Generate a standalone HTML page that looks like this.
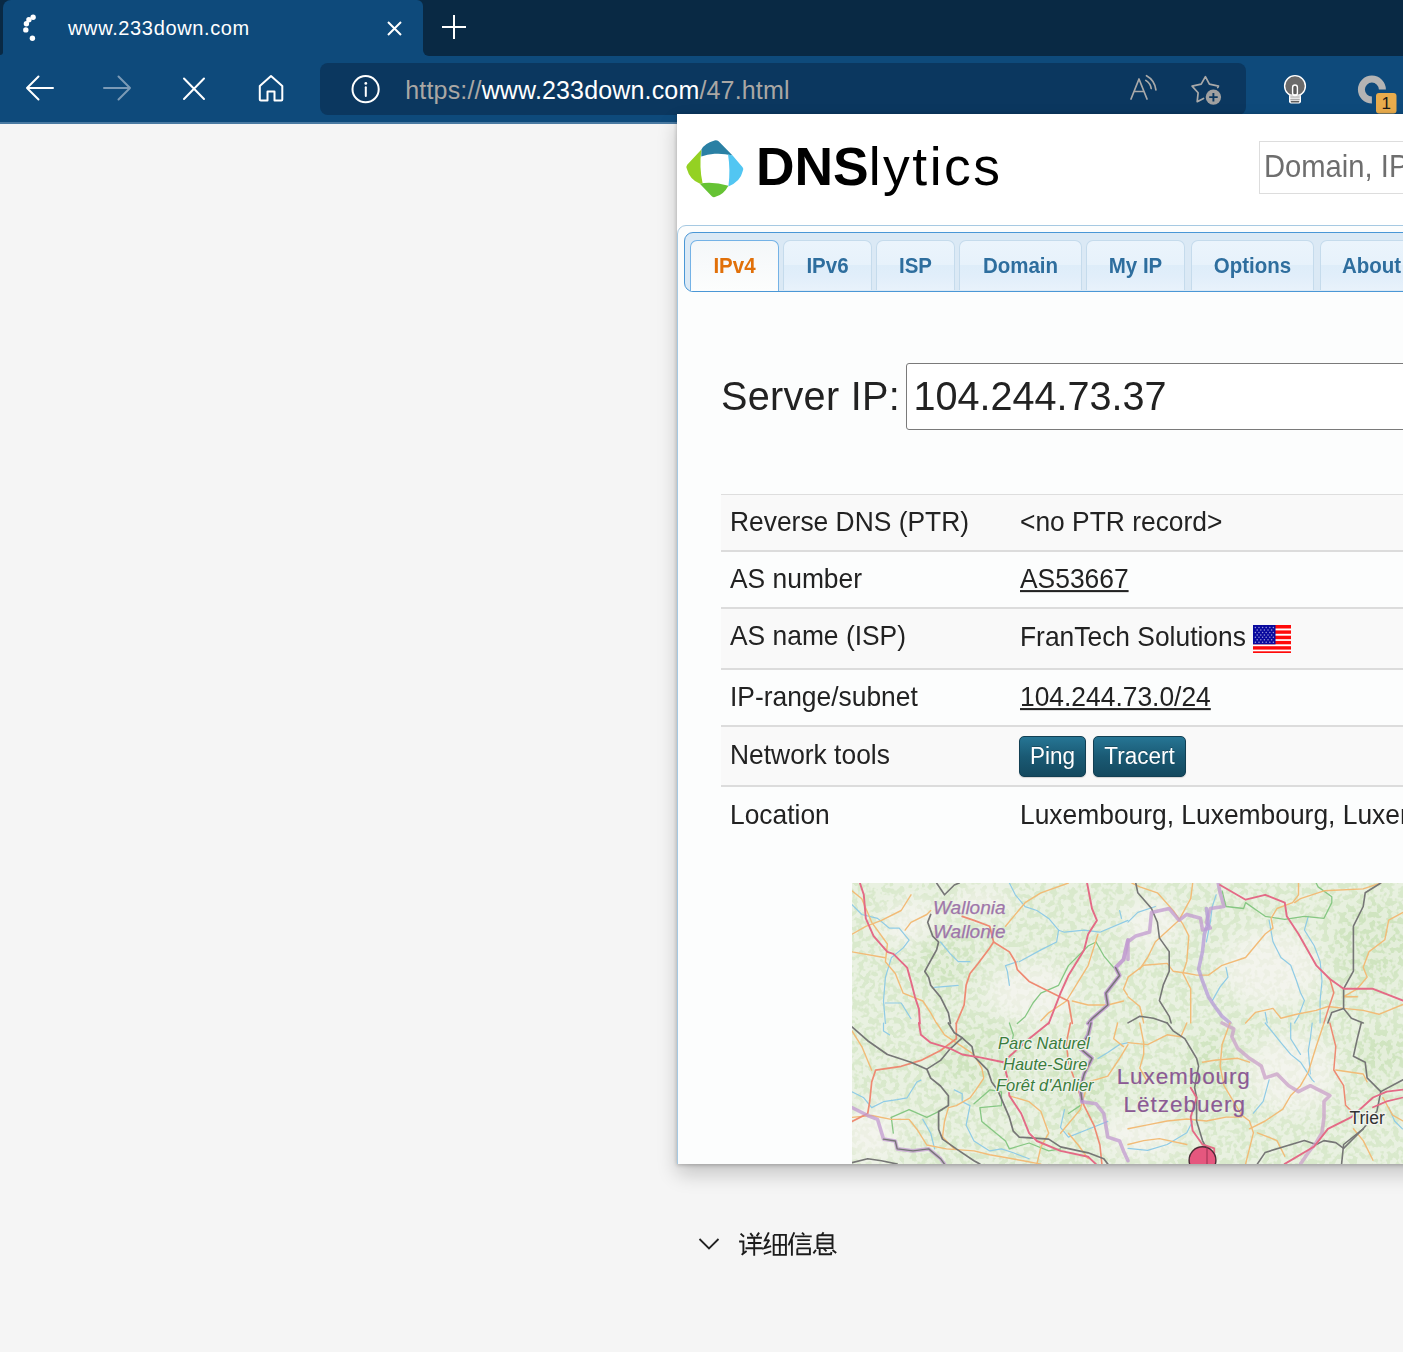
<!DOCTYPE html>
<html><head><meta charset="utf-8">
<style>
*{margin:0;padding:0;box-sizing:border-box}
html,body{width:1403px;height:1352px;overflow:hidden;background:#f5f5f5;font-family:"Liberation Sans",sans-serif}
body{position:relative}
.abs{position:absolute}
.nw{white-space:nowrap}
#strip{left:423px;top:0;width:980px;height:55.6px;background:#092944;border-radius:0 0 0 6px}
#stripl{left:0;top:0;width:3.4px;height:54.5px;background:#092944;border-radius:0 0 3px 0}
#cornl{left:0;top:0;width:14px;height:12px;background:#092944}
#cornr{left:410px;top:0;width:14px;height:12px;background:#092944}
#tab{left:3.4px;top:0;width:419.6px;height:60px;background:#0e4a7b;border-radius:8px 6px 0 0}
#toolbar{left:0;top:0;width:1403px;height:122px;background:#0e4a7b}
#tbline{left:0;top:122.3px;width:1403px;height:1.7px;background:#4a7aa2}
#addr{left:320px;top:63px;width:926px;height:52.4px;background:#0b375f;border-radius:8px}
.tabtitle{left:68px;top:17px;font-size:20px;letter-spacing:.64px;color:#fff}
.url{left:405.3px;top:75.5px;font-size:25px;letter-spacing:.16px;color:#aaa7a4}
.url b{font-weight:normal;color:#fff}
#pshadow{left:677px;top:114px;width:760px;height:1050px;box-shadow:0 1px 4px rgba(0,0,0,.24),0 10px 19px rgba(0,0,0,.2)}
#popup{left:677px;top:114px;width:726px;height:1050px;background:#fff;overflow:hidden}
#pin{left:-677px;top:-114px;width:1403px;height:1352px}
#uitabs{left:677px;top:225px;width:800px;height:1000px;background:#fcfdfd;border:1px solid #a6c9e2;border-radius:9px 0 0 0}
#nav{left:684px;top:232px;width:800px;height:60px;background:#dbe9f5;border:1px solid #4a97d6;border-radius:9px 0 0 9px}
.tb{top:240px;height:50px;border:1px solid #c5dbec;border-bottom:0;border-radius:7px 7px 0 0;
 background:linear-gradient(#ebf4fc 0%,#e7f2fb 48%,#deedf9 50%,#e1eefa 72%,#e8f2fb 100%);
 color:#2e6e9e;font-weight:bold;font-size:20.5px;text-align:center;line-height:50px}
.tb.act{border-color:#74b2e6;background:linear-gradient(#f4f7f9,#fcfdfd);color:#e17009}
.ts{display:inline-block;transform:scaleY(1.07);transform-origin:0 32.1px}
.bs{display:inline-block;transform:scaleY(1.09);transform-origin:0 27.6px}
.cell{font-size:26.4px;color:#222;transform:scaleY(1.035);transform-origin:0 24.1px}
.row{left:721px;width:800px}
.btn{text-shadow:0 -1px 0 rgba(0,0,0,.25);top:736px;height:41px;border:1px solid #123f53;border-radius:5px;background:linear-gradient(#267594,#1a5a74 50%,#14495f);color:#fff;font-size:22.5px;line-height:39.5px;text-align:center;box-shadow:0 1px 1px rgba(0,0,0,.15)}
</style></head>
<body>
<div id="toolbar" class="abs"></div>
<div id="strip" class="abs"></div>
<div id="stripl" class="abs"></div>
<div id="cornl" class="abs"></div>
<div id="cornr" class="abs"></div>
<div id="tab" class="abs"></div>
<div id="tbline" class="abs"></div>
<!-- spinner -->
<svg class="abs" style="left:0;top:0" width="60" height="56">
<g fill="#fff"><circle cx="33.1" cy="17.3" r="2.7"/><circle cx="28.9" cy="19.8" r="2.7"/><circle cx="26.4" cy="23.8" r="2.7"/><circle cx="25.8" cy="29.9" r="2.7"/><circle cx="32.4" cy="38.3" r="2.7"/></g>
</svg>
<div class="abs nw tabtitle">www.233down.com</div>
<svg class="abs" style="left:380px;top:8px" width="100" height="40">
<g stroke="#fff" stroke-width="2" fill="none"><path d="M8 14 L21 27 M21 14 L8 27"/><path d="M74 7 V31 M62 19 H86"/></g>
</svg>
<div id="addr" class="abs"></div>
<!-- toolbar icons -->
<svg class="abs" style="left:0;top:55px" width="400" height="67">
<g fill="none" stroke-width="2" stroke-linecap="round" stroke-linejoin="round">
<path stroke="#fff" d="M27 33 H53 M38.5 21.5 L27 33 L38.5 44.5"/>
<path stroke="#7b9ab6" d="M104 33 H130 M118.5 21.5 L130 33 L118.5 44.5"/>
<path stroke="#fff" d="M184 23.5 L204 44 M204 23.5 L184 44"/>
<path stroke="#fff" d="M259.8 31 L271 21 L282.3 31 V44.5 Q282.3 45.5 281.3 45.5 H274.5 V36.5 H267.5 V45.5 H260.8 Q259.8 45.5 259.8 44.5 Z"/>
<circle stroke="#fff" cx="365.6" cy="34.2" r="13.1"/>
<path stroke="#fff" d="M365.8 32.3 V41"/>
</g>
<circle fill="#fff" cx="365.8" cy="28.4" r="1.4"/>
</svg>
<div class="abs nw url">https://<b>www.233down.com</b>/47.html</div>
<svg class="abs" style="left:1110px;top:55px" width="293" height="67">
<g fill="none" stroke="#a9a9a9" stroke-width="1.7" stroke-linecap="round" stroke-linejoin="round">
<path d="M21 44 L29 24 L37 44 M24 36.5 H34"/>
<path d="M35.8 25.4 Q40.5 28.5 41.2 33.5"/>
<path d="M36.5 20.7 Q44.5 25 45.9 34.8"/>
<path d="M107.7 32.6 L108.5 31.1 L99.4 29.2 L95.4 21.7 L91.2 29.2 L82.1 31.1 L88.1 37.8 L87.2 46.7 L93.5 43.4"/>
</g>
<circle cx="103.4" cy="42.1" r="7.7" fill="#a0a0a0"/>
<path d="M103.4 38.1 V46.5 M99.2 42.1 H107.7" stroke="#0b375f" stroke-width="1.9"/>
<!-- bulb -->
<circle cx="185" cy="31" r="10.4" fill="#6a6a6a" stroke="#fff" stroke-width="1.4"/>
<rect x="179" y="39.4" width="12" height="9" rx="1.8" fill="#fff"/>
<rect x="180.3" y="40.4" width="9.4" height="2.6" fill="#c9c9c9"/>
<rect x="180.3" y="43.7" width="9.4" height="1.7" fill="#a9a9a9"/>
<rect x="180.6" y="46" width="8.8" height="1.6" rx=".8" fill="#5e5e5e"/>
<rect x="182.6" y="30" width="4.8" height="10.5" rx="2.4" fill="#5a5a5a" stroke="#fff" stroke-width="1.4"/>
<rect x="183.3" y="39.2" width="3.4" height="1.2" fill="#fff"/>
<!-- ring -->
<path d="M272.4 34.6 A10.5 10.5 0 1 0 261.9 45.1" fill="none" stroke="#b4b4b4" stroke-width="7"/>
<rect x="266" y="38" width="20.5" height="20.5" rx="3" fill="#e9ac4c"/>
<text x="276.2" y="54" font-size="17" text-anchor="middle" fill="#1a1a1a" font-family="Liberation Sans">1</text>
</svg>

<div id="pshadow" class="abs"></div>
<div id="popup" class="abs"><div id="pin" class="abs">
<!-- logo -->
<svg class="abs" style="left:680px;top:132px" width="70" height="72">
<path fill="#2a80a4" d="M21.3 24.6 L21.4 17.6 Q24 11.5 34.5 8.4 Q37 7.9 38.6 9.3 L52.6 23.5 Q43 21.2 34.6 21.8 Q27 22.6 21.3 24.6 Z"/>
<path fill="#52c6f2" d="M48 22.3 L52.6 23.5 L62.6 35.3 Q64.3 37.3 62.6 39.6 Q60.5 49.5 48.4 54.5 Q50.6 38 48 22.3 Z"/>
<path fill="#66c334" d="M48.4 53.8 Q43.5 63 35.5 64.8 Q33.5 65.8 31.8 64.2 L19.6 51.6 Q33 49.2 48.4 53.8 Z"/>
<path fill="#94d123" d="M21.4 17.6 L7.2 32.8 Q5.6 34.8 7 37.2 Q9.5 47 19.6 51.6 L22.6 51.2 Q19 36 21.4 17.6 Z"/>
</svg>
<div class="abs nw" style="left:756px;top:135.5px;font-size:53.4px;line-height:62px;color:#000"><b>DNS</b><span style="letter-spacing:2.5px">lytics</span></div>
<div class="abs" style="left:1259px;top:141px;width:300px;height:53px;border:1px solid #dddddd;background:#fff"></div>
<div class="abs nw" style="left:1264px;top:150px;font-size:29.2px;line-height:34px;color:#6e6e6e;transform:scaleY(1.045);transform-origin:0 27.1px">Domain, IP</div>

<div id="uitabs" class="abs"></div>
<div id="nav" class="abs"></div>
<div class="abs tb act" style="left:690px;width:89px;height:51px"><span class="ts">IPv4</span></div>
<div class="abs tb" style="left:783px;width:89px"><span class="ts">IPv6</span></div>
<div class="abs tb" style="left:876px;width:79px"><span class="ts">ISP</span></div>
<div class="abs tb" style="left:959px;width:123px"><span class="ts">Domain</span></div>
<div class="abs tb" style="left:1086px;width:99px"><span class="ts">My IP</span></div>
<div class="abs tb" style="left:1191px;width:123px"><span class="ts">Options</span></div>
<div class="abs tb" style="left:1320px;width:110px;text-align:left;padding-left:21px"><span class="ts">About</span></div>

<div class="abs nw" style="left:721px;top:373.8px;letter-spacing:.3px;font-size:39.6px;line-height:44px;color:#222;transform:scaleY(1.04);transform-origin:0 35.7px">Server IP:</div>
<div class="abs" style="left:906px;top:363px;width:520px;height:67px;border:1px solid #7a7a7a;border-radius:3px;background:#fff"></div>
<div class="abs nw" style="left:913.5px;top:373.8px;font-size:39.6px;line-height:44px;color:#222;transform:scaleY(1.04);transform-origin:0 35.7px">104.244.73.37</div>

<!-- table -->
<div class="abs row" style="top:494px;height:1px;background:#dedede"></div>
<div class="abs row" style="top:495px;height:55px;background:#f9f9f9"></div>
<div class="abs row" style="top:550px;height:2px;background:#dcdcdc"></div>
<div class="abs row" style="top:607px;height:2px;background:#dcdcdc"></div>
<div class="abs row" style="top:609px;height:59px;background:#f9f9f9"></div>
<div class="abs row" style="top:668px;height:2px;background:#dcdcdc"></div>
<div class="abs row" style="top:725px;height:2px;background:#dcdcdc"></div>
<div class="abs row" style="top:727px;height:58px;background:#f9f9f9"></div>
<div class="abs row" style="top:785px;height:2px;background:#dcdcdc"></div>

<div class="abs nw cell" style="left:730px;top:507px;line-height:30px">Reverse DNS (PTR)</div>
<div class="abs nw cell" style="left:1020px;top:507px;line-height:30px">&lt;no PTR record&gt;</div>
<div class="abs nw cell" style="left:730px;top:564px;line-height:30px">AS number</div>
<div class="abs nw cell" style="left:1020px;top:564px;line-height:30px;text-decoration:underline">AS53667</div>
<div class="abs nw cell" style="left:730px;top:621px;line-height:30px">AS name (ISP)</div>
<div class="abs nw cell" style="left:1020px;top:622px;line-height:30px">FranTech Solutions</div>
<svg class="abs" style="left:1252.8px;top:624.8px" width="38.5" height="28.3" viewBox="0 0 38.5 28.3">
<rect width="38.5" height="28.3" fill="#fff"/>
<g fill="#ff0a0a"><rect y="0" width="38.5" height="3.5"/><rect y="5.4" width="38.5" height="3.4"/><rect y="10.7" width="38.5" height="3.5"/><rect y="15.9" width="38.5" height="3.4"/><rect y="21.2" width="38.5" height="3.4"/><rect y="26.3" width="38.5" height="2"/></g>
<rect width="22.5" height="19.3" fill="#0a0a9e"/>
<g fill="#9a9ad8"><circle cx="2.4" cy="2.5" r=".75"/><circle cx="6.0" cy="2.5" r=".75"/><circle cx="9.6" cy="2.5" r=".75"/><circle cx="13.2" cy="2.5" r=".75"/><circle cx="16.8" cy="2.5" r=".75"/><circle cx="20.4" cy="2.5" r=".75"/><circle cx="4.2" cy="5.0" r=".75"/><circle cx="7.8" cy="5.0" r=".75"/><circle cx="11.4" cy="5.0" r=".75"/><circle cx="15.0" cy="5.0" r=".75"/><circle cx="18.6" cy="5.0" r=".75"/><circle cx="2.4" cy="7.4" r=".75"/><circle cx="6.0" cy="7.4" r=".75"/><circle cx="9.6" cy="7.4" r=".75"/><circle cx="13.2" cy="7.4" r=".75"/><circle cx="16.8" cy="7.4" r=".75"/><circle cx="20.4" cy="7.4" r=".75"/><circle cx="4.2" cy="9.9" r=".75"/><circle cx="7.8" cy="9.9" r=".75"/><circle cx="11.4" cy="9.9" r=".75"/><circle cx="15.0" cy="9.9" r=".75"/><circle cx="18.6" cy="9.9" r=".75"/><circle cx="2.4" cy="12.3" r=".75"/><circle cx="6.0" cy="12.3" r=".75"/><circle cx="9.6" cy="12.3" r=".75"/><circle cx="13.2" cy="12.3" r=".75"/><circle cx="16.8" cy="12.3" r=".75"/><circle cx="20.4" cy="12.3" r=".75"/><circle cx="4.2" cy="14.8" r=".75"/><circle cx="7.8" cy="14.8" r=".75"/><circle cx="11.4" cy="14.8" r=".75"/><circle cx="15.0" cy="14.8" r=".75"/><circle cx="18.6" cy="14.8" r=".75"/><circle cx="2.4" cy="17.2" r=".75"/><circle cx="6.0" cy="17.2" r=".75"/><circle cx="9.6" cy="17.2" r=".75"/><circle cx="13.2" cy="17.2" r=".75"/><circle cx="16.8" cy="17.2" r=".75"/><circle cx="20.4" cy="17.2" r=".75"/></g>
</svg>
<div class="abs nw cell" style="left:730px;top:682px;line-height:30px">IP-range/subnet</div>
<div class="abs nw cell" style="left:1020px;top:682px;line-height:30px;text-decoration:underline">104.244.73.0/24</div>
<div class="abs nw cell" style="left:730px;top:739.5px;line-height:30px">Network tools</div>
<div class="abs btn" style="left:1019px;width:67px"><span class="bs">Ping</span></div>
<div class="abs btn" style="left:1093px;width:93px"><span class="bs">Tracert</span></div>
<div class="abs nw cell" style="left:730px;top:799.5px;line-height:30px">Location</div>
<div class="abs nw cell" style="left:1020px;top:799.5px;line-height:30px">Luxembourg, Luxembourg, Luxembourg</div>

<!-- map -->
<svg id="map" class="abs" style="left:852px;top:883px" width="551" height="281" viewBox="0 0 551 281">
<defs>
<filter id="bl" x="-50%" y="-50%" width="200%" height="200%"><feGaussianBlur stdDeviation="9"/></filter>
<filter id="spk" x="0" y="0" width="100%" height="100%">
<feTurbulence type="fractalNoise" baseFrequency="0.17" numOctaves="2" seed="7"/>
<feColorMatrix type="matrix" values="0 0 0 0 0.95  0 0 0 0 0.95  0 0 0 0 0.92  0 0 0 -9 5.2"/>
<feGaussianBlur stdDeviation=".6"/>
</filter>
</defs>
<rect width="551" height="281" fill="#d9e9cc"/>
<g filter="url(#bl)" fill="#edf0e4">
<ellipse cx="180" cy="110" rx="45" ry="30"/><ellipse cx="420" cy="85" rx="50" ry="40"/><ellipse cx="440" cy="190" rx="45" ry="40"/>
<ellipse cx="60" cy="40" rx="30" ry="25"/><ellipse cx="20" cy="250" rx="30" ry="30"/><ellipse cx="300" cy="40" rx="30" ry="25"/>
<ellipse cx="290" cy="250" rx="40" ry="25"/><ellipse cx="130" cy="20" rx="30" ry="15"/>
</g>
<g filter="url(#bl)" fill="#cfe4bf">
<ellipse cx="520" cy="60" rx="40" ry="45"/><ellipse cx="130" cy="175" rx="50" ry="35"/><ellipse cx="90" cy="80" rx="30" ry="30"/>
<ellipse cx="230" cy="200" rx="30" ry="40"/><ellipse cx="530" cy="170" rx="30" ry="25"/><ellipse cx="360" cy="180" rx="25" ry="30"/>
</g>
<rect width="551" height="281" filter="url(#spk)" opacity=".5"/>
<g fill="none" stroke-linecap="round" stroke-linejoin="round">
<path d="M0.0 21.6 L9.8 31.5 L25.6 35.4 L37.4 45.2 L47.2 45.2 L57.1 57.1 L51.2 64.9 L39.3 74.8 L33.4 94.4 L31.5 118.0 L33.4 140.5" stroke="#8fcbe6" stroke-width="1.2"/>
<path d="M33.4 120.0 L49.2 120.0 L59.0 135.7" stroke="#8fcbe6" stroke-width="1.2"/>
<path d="M157.4 0.0 L163.3 11.8 L173.1 23.6 L184.9 27.5 L196.7 35.4 L206.6 47.2 L212.5 49.2 L232.1 47.2 L247.9 49.2 L276.0 37.4" stroke="#8fcbe6" stroke-width="1.2"/>
<path d="M267.6 27.5 L269.5 35.4" stroke="#8fcbe6" stroke-width="1.2"/>
<path d="M88.5 59.0 L98.4 70.8 L106.2 78.7 L118.0 78.7" stroke="#8fcbe6" stroke-width="1.2"/>
<path d="M82.6 104.3 L106.2 102.3" stroke="#8fcbe6" stroke-width="1.2"/>
<path d="M165.3 78.7 L153.5 82.6 L155.4 88.5 L157.4 102.3" stroke="#8fcbe6" stroke-width="1.2"/>
<path d="M206.6 47.2 L204.6 59.0 L188.9 66.9 L167.2 78.7" stroke="#8fcbe6" stroke-width="1.2"/>
<path d="M244.0 59.0 L251.8 72.8 L261.7 84.6" stroke="#86c783" stroke-width="1.3"/>
<path d="M244.0 59.0 L236.1 63.0 L216.4 82.6 L206.6 102.3 L188.9 110.2 L181.0 120.0 L173.1 133.8 L165.3 140.5" stroke="#86c783" stroke-width="1.3"/>
<path d="M0.0 7.9 L9.8 15.7 L19.7 39.3 L35.4 61.0 L33.4 78.7 L43.3 90.5 L51.2 110.2 L70.8 118.0 L78.7 129.8 L84.6 140.5" stroke="#f2bb77" stroke-width="1.4"/>
<path d="M0.0 51.2 L13.8 43.3 L29.5 37.4 L49.2 27.5 L59.0 11.8" stroke="#f2bb77" stroke-width="1.4"/>
<path d="M53.1 47.2 L59.0 39.3 L74.8 31.5 L78.7 27.5" stroke="#f2bb77" stroke-width="1.4"/>
<path d="M0.0 68.9 L33.4 74.8" stroke="#f2bb77" stroke-width="1.4"/>
<path d="M153.5 43.3 L173.1 19.7 L188.9 9.8 L216.4 0.0" stroke="#f2bb77" stroke-width="1.4"/>
<path d="M188.9 137.7 L196.7 129.8 L214.4 118.0 L236.1 82.6 L245.9 51.2" stroke="#f2bb77" stroke-width="1.4"/>
<path d="M220.3 118.0 L236.1 122.0 L255.8 122.0 L271.5 118.0" stroke="#f2bb77" stroke-width="1.4"/>
<path d="M276.0 94.4 L271.5 106.2 L275.4 112.1" stroke="#f2bb77" stroke-width="1.4"/>
<path d="M84.6 0.0 L92.5 11.8 L102.3 2.0 L107.2 0.0" stroke="#767676" stroke-width="1.6"/>
<path d="M78.7 31.5 L75.7 39.3 L80.7 53.1 L86.6 59.0 L84.6 66.9 L74.8 84.6 L72.8 88.5 L76.7 94.4 L78.7 102.3 L88.5 114.1 L96.4 129.8 L98.4 140.5" stroke="#767676" stroke-width="1.7"/>
<path d="M110.2 33.4 L122.0 37.4 L137.7 43.3 L141.6 59.0 L137.7 64.9 L125.9 80.7 L118.0 90.5 L114.1 102.3 L112.1 122.0 L104.3 140.5" stroke="#ee8a72" stroke-width="1.7"/>
<path d="M141.6 59.0 L157.4 68.9 L163.3 78.7 L165.3 86.6 L177.1 98.4 L200.7 110.2 L216.4 118.0 L220.3 140.5" stroke="#ee8a72" stroke-width="1.7"/>
<path d="M276.0 57.1 L271.5 76.7 L263.6 84.6 L267.6 92.5 L253.8 110.2 L255.8 122.0 L240.0 135.7 L236.1 140.5" stroke="#c19ad0" stroke-width="4" stroke-opacity="0.9"/>
<path d="M263.6 84.6 L267.6 92.5 L253.8 110.2 L255.8 122.0 L240.0 135.7 L236.1 140.5" stroke="#767676" stroke-width="1.5"/>
<path d="M7.9 0.0 L11.8 11.8 L13.8 35.4 L21.6 53.1 L35.4 68.9 L41.3 70.8 L55.1 84.6 L59.0 98.4 L63.0 114.1 L66.9 125.9 L67.9 140.5" stroke="#e46a86" stroke-width="1.9"/>
<path d="M235.1 0.0 L240.0 25.6 L244.9 37.4 L236.1 51.2 L232.1 66.9 L216.4 92.5 L208.5 110.2 L196.7 140.5" stroke="#e46a86" stroke-width="1.9"/>
<path d="M276.0 39.2 L285.8 29.4 L303.4 23.5" stroke="#8fcbe6" stroke-width="1.2"/>
<path d="M364.2 11.8 L360.3 23.5 L358.3 39.2 L354.4 58.8" stroke="#8fcbe6" stroke-width="1.2"/>
<path d="M417.1 37.2 L421.0 58.8 L428.9 74.5 L438.7 82.3 L444.6 98.0 L448.5 109.8 L452.4 117.6 L446.5 133.3 L442.6 139.9" stroke="#8fcbe6" stroke-width="1.2"/>
<path d="M456.3 33.3 L452.4 47.0 L462.2 62.7 L468.1 78.4 L470.0 98.0 L468.1 117.6 L468.1 139.9" stroke="#8fcbe6" stroke-width="1.2"/>
<path d="M374.0 84.3 L376.0 94.1 L368.1 103.9 L360.3 117.6" stroke="#8fcbe6" stroke-width="1.2"/>
<path d="M413.2 129.4 L415.2 139.9" stroke="#8fcbe6" stroke-width="1.2"/>
<path d="M370.1 7.8 L374.0 23.5 L391.6 25.5 L393.6 19.6 L413.2 33.3 L432.8 36.3 L452.4 33.3 L472.0 35.3 L479.8 19.6 L479.8 13.7 L466.1 3.9 L464.2 0.0" stroke="#86c783" stroke-width="1.3"/>
<path d="M276.0 94.1 L291.7 82.3 L315.2 80.4 L321.1 88.2 L334.8 90.2 L344.6 92.1 L356.4 92.1 L370.1 82.3 L393.6 74.5 L413.2 51.0 L421.0 45.1 L419.1 35.3 L425.0 25.5 L440.6 19.6 L446.5 11.8 L446.5 0.0" stroke="#f2bb77" stroke-width="1.4"/>
<path d="M276.0 113.7 L287.8 123.5 L291.7 139.9" stroke="#f2bb77" stroke-width="1.4"/>
<path d="M279.9 0.0 L287.8 3.9 L305.4 9.8 L321.1 27.4 L330.9 41.2 L336.8 52.9 L334.8 78.4 L330.9 90.2 L338.7 105.8 L338.7 139.9" stroke="#f2bb77" stroke-width="1.4"/>
<path d="M340.7 0.0 L338.7 15.7 L327.0 37.2 L303.4 58.8 L295.6 74.5 L287.8 86.2" stroke="#f2bb77" stroke-width="1.4"/>
<path d="M393.6 139.9 L403.4 129.4 L421.0 125.4 L428.9 135.2 L444.6 131.3 L464.2 127.4 L475.9 123.5 L491.6 125.4 L511.2 127.4 L526.9 131.3 L551.0 121.5" stroke="#f2bb77" stroke-width="1.4"/>
<path d="M442.6 19.6 L448.5 15.7 L472.0 7.8 L511.2 5.9 L528.8 0.0" stroke="#f2bb77" stroke-width="1.4"/>
<path d="M551.0 29.4 L536.7 37.2 L532.8 56.8 L517.1 68.6 L511.2 84.3 L515.1 94.1 L505.3 105.8 L491.6 113.7 L505.3 113.7" stroke="#f2bb77" stroke-width="1.4"/>
<path d="M477.9 96.0 L481.8 109.8 L475.9 127.4 L472.0 139.9" stroke="#ee8a72" stroke-width="1.5"/>
<path d="M283.8 0.0 L285.8 9.8 L299.5 25.5 L305.4 39.2 L307.4 54.9 L317.2 68.6 L317.2 88.2 L311.3 101.9 L307.4 117.6 L317.2 133.3 L319.1 139.9" stroke="#767676" stroke-width="1.6"/>
<path d="M528.8 0.0 L513.2 9.8 L511.2 23.5 L501.4 43.1 L501.4 58.8 L501.4 88.2 L491.6 105.8 L491.6 125.4 L479.8 129.4 L475.9 139.9" stroke="#767676" stroke-width="1.6"/>
<path d="M491.6 125.4 L499.4 135.2 L511.2 139.9" stroke="#767676" stroke-width="1.6"/>
<path d="M276.0 139.9 L287.8 133.3 L301.5 135.2 L315.2 139.9" stroke="#767676" stroke-width="1.6"/>
<path d="M276.0 76.4 L276.0 58.8 L283.8 52.9 L297.6 49.0 L299.5 29.4 L317.2 25.5 L327.0 37.2 L334.8 31.4 L348.5 35.3 L350.5 47.0 L358.3 45.1 L354.4 39.2 L358.3 25.5 L372.0 23.5 L368.1 9.8 L366.2 0.0" stroke="#c19ad0" stroke-width="3.6" stroke-opacity="0.75"/>
<path d="M354.4 25.5 L356.4 39.2 L352.4 51.0 L350.5 68.6 L346.6 86.2 L350.5 98.0 L356.4 113.7 L364.2 125.4 L370.1 133.3 L377.9 139.9" stroke="#b59ad8" stroke-width="3.6" stroke-opacity="0.75"/>
<path d="M368.1 2.0 L393.6 16.7 L413.2 11.8 L432.8 19.6 L434.8 33.3 L446.5 51.0 L464.2 82.3 L477.9 96.0 L491.6 105.8 L521.0 105.8 L551.0 117.6" stroke="#e46a86" stroke-width="1.9"/>
<path d="M31.5 140.0 L31.5 147.9 L37.4 151.8" stroke="#8fcbe6" stroke-width="1.2"/>
<path d="M0.0 208.9 L11.8 214.8 L19.7 224.6 L31.5 218.7 L45.2 216.7 L55.1 214.8 L64.9 199.0 L68.9 197.1" stroke="#8fcbe6" stroke-width="1.2"/>
<path d="M102.3 206.9 L110.2 210.8 L110.2 218.7 L118.0 222.6 L114.1 242.3 L122.0 258.0 L137.7 267.9 L149.5 265.9 L161.3 269.8 L177.1 275.7" stroke="#8fcbe6" stroke-width="1.2"/>
<path d="M70.8 236.4 L78.7 250.2 L82.6 265.9" stroke="#8fcbe6" stroke-width="1.2"/>
<path d="M212.5 226.6 L208.5 244.3 L216.4 254.1 L236.1 246.2 L255.8 238.4" stroke="#8fcbe6" stroke-width="1.2"/>
<path d="M245.9 175.4 L255.8 169.5 L267.6 161.6 L276.0 159.7" stroke="#8fcbe6" stroke-width="1.2"/>
<path d="M122.0 220.7 L137.7 206.9 L149.5 208.9 L149.5 222.6 L127.9 224.6 L129.8 238.4 L153.5 258.0 L157.4 265.9 L177.1 260.0 L196.7 267.9 L208.5 265.9" stroke="#86c783" stroke-width="1.3"/>
<path d="M39.3 234.4 L57.1 226.6 L74.8 234.4 L90.5 226.6" stroke="#86c783" stroke-width="1.3"/>
<path d="M39.3 234.4 L41.3 250.2" stroke="#86c783" stroke-width="1.3"/>
<path d="M216.4 230.5 L228.2 222.6" stroke="#86c783" stroke-width="1.3"/>
<path d="M157.4 140.0 L161.3 151.8 L159.4 163.6" stroke="#86c783" stroke-width="1.3"/>
<path d="M0.0 147.9 L9.8 163.6 L19.7 187.2" stroke="#f2bb77" stroke-width="1.4"/>
<path d="M84.6 140.0 L92.5 151.8 L110.2 163.6 L122.0 171.5 L129.8 185.2 L131.8 195.1 L123.9 206.9 L118.0 214.8 L104.3 222.6 L96.4 224.6 L92.5 238.4 L90.5 254.1 L102.3 265.9" stroke="#f2bb77" stroke-width="1.4"/>
<path d="M0.0 234.4 L19.7 232.5 L39.3 236.4 L57.1 236.4 L64.9 246.2 L74.8 262.0 L94.4 265.9 L122.0 267.9 L137.7 271.8 L171.2 277.7 L188.9 281.1" stroke="#f2bb77" stroke-width="1.4"/>
<path d="M157.4 212.8 L177.1 218.7 L188.9 228.5 L196.7 250.2 L188.9 263.9 L184.9 281.1" stroke="#f2bb77" stroke-width="1.4"/>
<path d="M208.5 250.2 L228.2 226.6 L236.1 199.0 L255.8 193.1 L267.6 175.4 L276.0 161.6" stroke="#f2bb77" stroke-width="1.4"/>
<path d="M265.6 140.0 L261.7 155.7 L271.5 163.6" stroke="#f2bb77" stroke-width="1.4"/>
<path d="M216.4 250.2 L226.2 262.0 L236.1 275.7" stroke="#f2bb77" stroke-width="1.4"/>
<path d="M104.3 140.0 L104.3 155.7 L88.5 167.5 L68.9 177.4 L49.2 183.3 L23.6 187.2 L19.7 199.0 L17.7 218.7 L15.7 230.5 L0.0 238.4" stroke="#ee8a72" stroke-width="1.7"/>
<path d="M218.4 140.0 L214.4 159.7 L216.4 179.3 L226.2 206.9 L232.1 222.6 L242.0 242.3 L247.9 262.0 L249.9 281.1" stroke="#ee8a72" stroke-width="1.6"/>
<path d="M0.0 143.9 L15.7 157.7 L35.4 171.5 L59.0 179.3 L74.8 186.2 L78.7 195.1 L88.5 203.0 L96.4 212.8 L96.4 222.6 L86.6 228.5 L86.6 246.2 L90.5 256.1 L104.3 265.9 L122.0 277.7 L127.9 281.1" stroke="#767676" stroke-width="1.7"/>
<path d="M96.4 140.0 L102.3 149.8 L110.2 154.8 L120.0 163.6 L122.0 173.4 L135.7 187.2 L139.7 199.0 L145.6 206.9 L151.5 220.7 L157.4 234.4 L161.3 248.2 L167.2 254.1 L196.7 256.1 L208.5 263.9 L236.1 269.8 L251.8 275.7 L255.8 281.1" stroke="#767676" stroke-width="1.7"/>
<path d="M110.2 154.8 L98.4 165.6 L88.5 177.4 L74.8 186.2" stroke="#767676" stroke-width="1.6"/>
<path d="M0.0 279.7 L15.7 275.7 L29.5 277.7 L45.2 281.1" stroke="#767676" stroke-width="1.6"/>
<path d="M239.0 140.0 L236.1 151.8 L228.2 165.6 L240.0 175.4 L232.1 191.2 L228.2 204.9 L230.2 218.7" stroke="#c19ad0" stroke-width="4" stroke-opacity="0.9"/>
<path d="M239.0 140.0 L236.1 151.8 L228.2 165.6 L240.0 175.4 L232.1 191.2 L228.2 204.9 L230.2 218.7" stroke="#767676" stroke-width="1.5"/>
<path d="M0.0 224.6 L15.7 232.5 L25.6 236.4 L31.5 256.1 L43.3 258.0 L45.2 265.9 L61.0 267.9 L76.7 265.9 L88.5 275.7 L92.5 281.1" stroke="#c19ad0" stroke-width="3.6" stroke-opacity="0.75"/>
<path d="M31.5 256.1 L43.3 258.0 L45.2 265.9 L61.0 267.9 L76.7 265.9 L88.5 275.7 L92.5 281.1" stroke="#767676" stroke-width="1.4"/>
<path d="M230.2 218.7 L244.0 220.7 L251.8 230.5 L255.8 254.1 L267.6 258.0 L271.5 267.9 L276.0 277.7" stroke="#c19ad0" stroke-width="3.6" stroke-opacity="0.75"/>
<path d="M66.9 140.0 L68.9 151.8 L78.7 159.7 L98.4 165.6 L110.2 171.5 L127.9 174.4 L151.5 179.3 L155.4 195.1 L157.4 212.8 L169.2 230.5 L177.1 250.2 L184.9 258.0 L208.5 267.9 L236.1 273.8 L244.0 281.1" stroke="#e46a86" stroke-width="1.9"/>
<path d="M196.7 140.0 L177.1 155.7 L157.4 173.4 L151.5 179.3" stroke="#e46a86" stroke-width="1.9"/>
<path d="M413.2 140.0 L428.9 159.6 L438.7 171.4 L448.5 179.2 L460.2 196.8 L462.2 198.8" stroke="#8fcbe6" stroke-width="1.2"/>
<path d="M438.7 140.0 L438.7 155.7 L448.5 171.4" stroke="#8fcbe6" stroke-width="1.2"/>
<path d="M460.2 140.0 L458.3 155.7 L456.3 167.4 L458.3 191.0" stroke="#8fcbe6" stroke-width="1.2"/>
<path d="M401.4 230.2 L411.2 218.4 L417.1 196.8" stroke="#8fcbe6" stroke-width="1.2"/>
<path d="M276.0 265.4 L295.6 267.4 L315.2 261.5 L334.8 249.8 L340.7 238.0" stroke="#8fcbe6" stroke-width="1.2"/>
<path d="M536.7 224.3 L542.6 238.0 L550.4 245.8" stroke="#8fcbe6" stroke-width="1.2"/>
<path d="M276.0 159.6 L295.6 161.6 L315.2 151.8 L328.9 153.7 L334.8 140.0" stroke="#f2bb77" stroke-width="1.4"/>
<path d="M287.8 140.0 L291.7 159.6 L291.7 171.4 L287.8 185.1 L295.6 198.8" stroke="#f2bb77" stroke-width="1.4"/>
<path d="M276.0 245.8 L295.6 241.9 L315.2 238.0 L334.8 236.0 L354.4 238.0 L374.0 234.1 L389.7 234.1" stroke="#f2bb77" stroke-width="1.4"/>
<path d="M397.5 245.8 L413.2 238.0 L430.8 226.2 L438.7 212.5 L448.5 202.7 L456.3 189.0 L464.2 163.5 L472.0 140.0" stroke="#f2bb77" stroke-width="1.4"/>
<path d="M393.6 280.9 L401.4 249.8 L397.5 238.0 L389.7 232.1 L372.0 202.7 L368.1 183.1 L370.1 161.6 L377.9 140.0" stroke="#f2bb77" stroke-width="1.4"/>
<path d="M350.5 179.2 L362.2 177.2 L385.8 175.3 L397.5 179.2" stroke="#f2bb77" stroke-width="1.4"/>
<path d="M483.8 187.0 L511.2 191.0 L515.1 198.8" stroke="#f2bb77" stroke-width="1.4"/>
<path d="M501.4 245.8 L511.2 257.6 L521.0 277.2" stroke="#f2bb77" stroke-width="1.4"/>
<path d="M276.0 261.5 L291.7 257.6 L307.4 255.6 L334.8 261.5" stroke="#f2bb77" stroke-width="1.4"/>
<path d="M405.4 249.8 L425.0 257.6 L432.8 273.3" stroke="#f2bb77" stroke-width="1.4"/>
<path d="M530.8 214.5 L540.6 232.1 L551.0 238.0" stroke="#f2bb77" stroke-width="1.4"/>
<path d="M477.9 140.0 L483.8 163.5 L481.8 187.0 L491.6 202.7 L493.6 222.3 L501.4 230.2" stroke="#ee8a72" stroke-width="1.5"/>
<path d="M315.2 140.0 L321.1 147.8 L332.8 155.7 L338.7 165.5 L344.6 175.3 L346.6 183.1 L342.6 204.7 L344.6 214.5 L344.6 238.0 L350.5 257.6 L354.4 265.4" stroke="#767676" stroke-width="1.6"/>
<path d="M509.2 140.0 L505.3 155.7 L501.4 173.3 L513.2 179.2 L515.1 194.9 L528.8 208.6 L551.0 196.8" stroke="#767676" stroke-width="1.6"/>
<path d="M528.8 208.6 L524.9 228.2 L511.2 245.8 L491.6 261.5 L489.6 280.9" stroke="#767676" stroke-width="1.6"/>
<path d="M405.4 280.9 L413.2 269.4 L452.4 257.6 L464.2 261.5 L472.0 257.6 L483.8 259.6 L491.6 265.4 L511.2 245.8" stroke="#767676" stroke-width="1.6"/>
<path d="M370.1 140.0 L381.8 145.9 L379.9 153.7 L385.8 165.5 L397.5 175.3 L409.3 183.1 L413.2 194.9 L425.0 191.0 L436.7 202.7 L446.5 208.6 L458.3 202.7 L474.0 210.6 L477.9 212.5 L472.0 218.4 L472.0 234.1 L470.0 249.8 L464.2 259.6 L456.3 269.4 L448.5 280.9" stroke="#c9a0c8" stroke-width="3.6" stroke-opacity="0.75"/>
<path d="M338.7 204.7 L344.6 214.5 L338.7 234.1 L340.7 247.8 L350.5 261.5 L362.2 265.4 L362.2 280.9" stroke="#e46a86" stroke-width="1.9"/>
<path d="M432.8 280.9 L462.2 263.5 L475.9 245.8 L499.4 234.1 L521.0 214.5 L534.7 208.6 L551.0 206.6" stroke="#e46a86" stroke-width="1.9"/>
<path d="M551.0 214.5 L534.7 218.4 L521.0 224.3" stroke="#e46a86" stroke-width="1.7"/>
</g>
<circle cx="350.5" cy="277.2" r="13.4" fill="#e5577e" stroke="#4a2a35" stroke-width="1.4"/>
<path d="M355 264 V290" stroke="#9a3050" stroke-width="1"/>
<g font-family="Liberation Sans" font-style="italic">
<text x="81" y="30.7" font-size="19" fill="#9e76aa" stroke="#9e76aa" stroke-width=".25">Wallonia</text>
<text x="81" y="55" font-size="19" fill="#9e76aa" stroke="#9e76aa" stroke-width=".25">Wallonie</text>
<text x="146" y="165.7" font-size="16.5" fill="#3b7d3d" stroke="#eef3ea" stroke-width="2.5" paint-order="stroke">Parc Naturel</text>
<text x="151" y="186.8" font-size="16.5" fill="#3b7d3d" stroke="#eef3ea" stroke-width="2.5" paint-order="stroke">Haute-Sûre</text>
<text x="144" y="207.8" font-size="16.5" fill="#3b7d3d" stroke="#eef3ea" stroke-width="2.5" paint-order="stroke">Forêt d'Anlier</text>
</g>
<g font-family="Liberation Sans">
<text x="264.7" y="200.8" font-size="22.5" letter-spacing=".9" fill="#8b5a94" stroke="#8b5a94" stroke-width=".2" paint-order="stroke">Luxembourg</text>
<text x="271.5" y="229.2" font-size="22.5" letter-spacing="1" fill="#8b5a94" stroke="#8b5a94" stroke-width=".2" paint-order="stroke">Lëtzebuerg</text>
<text x="497.5" y="241" font-size="17.5" fill="#333" stroke="#f4f4f0" stroke-width="2.5" paint-order="stroke">Trier</text>
</g>
</svg>
</div></div>

<!-- details -->
<svg class="abs" style="left:690px;top:1228px" width="40" height="30">
<path d="M9.5 11 L19 20.5 L28.5 11" fill="none" stroke="#222" stroke-width="1.8"/>
</svg>
<svg class="abs" style="left:0;top:0" width="1403" height="1352"><path d="M740.6 1233.6 L744.0 1236.8 M739.1 1241.5 L743.4 1241.5 L743.4 1253.1 L741.7 1254.8 M741.7 1254.8 L746.6 1251.1 M750.3 1233.2 L752.8 1236.4 M759.1 1232.6 L756.7 1236.1 M747.0 1237.7 L761.9 1237.7 M747.9 1243.0 L761.2 1243.0 M745.5 1248.2 L762.8 1248.2 M754.2 1236.4 L754.2 1255.8 M768.8 1232.3 L764.8 1240.4 L769.3 1240.1 M769.3 1240.1 L764.3 1248.1 L771.1 1246.1 M763.8 1253.8 L771.3 1251.4 M773.7 1234.9 L785.9 1234.9 L785.9 1254.9 L773.7 1254.9 L773.7 1234.9 M779.8 1234.9 L779.8 1254.9 M773.7 1244.9 L785.9 1244.9 M794.3 1232.3 L788.5 1245.4 M791.9 1239.2 L791.9 1255.8 M802.0 1232.6 L804.2 1234.9 M794.9 1236.4 L811.7 1236.4 M797.3 1240.1 L809.9 1240.1 M797.3 1244.1 L809.9 1244.1 M797.3 1248.4 L809.9 1248.4 L809.9 1254.3 L797.3 1254.3 L797.3 1248.4 M823.5 1232.3 L821.8 1234.9 M817.5 1235.3 L832.5 1235.3 L832.5 1248.1 L817.5 1248.1 L817.5 1235.3 M817.5 1239.4 L832.5 1239.4 M817.5 1243.5 L832.5 1243.5 M813.4 1253.3 L816.0 1249.9 M819.7 1249.1 L819.7 1254.3 L831.0 1254.3 L831.4 1252.0 M823.7 1248.4 L826.5 1251.4 M832.5 1249.9 L836.2 1252.9" fill="none" stroke="#1c1c1c" stroke-width="1.9" stroke-linecap="butt" stroke-linejoin="miter"/></svg>
</body></html>
